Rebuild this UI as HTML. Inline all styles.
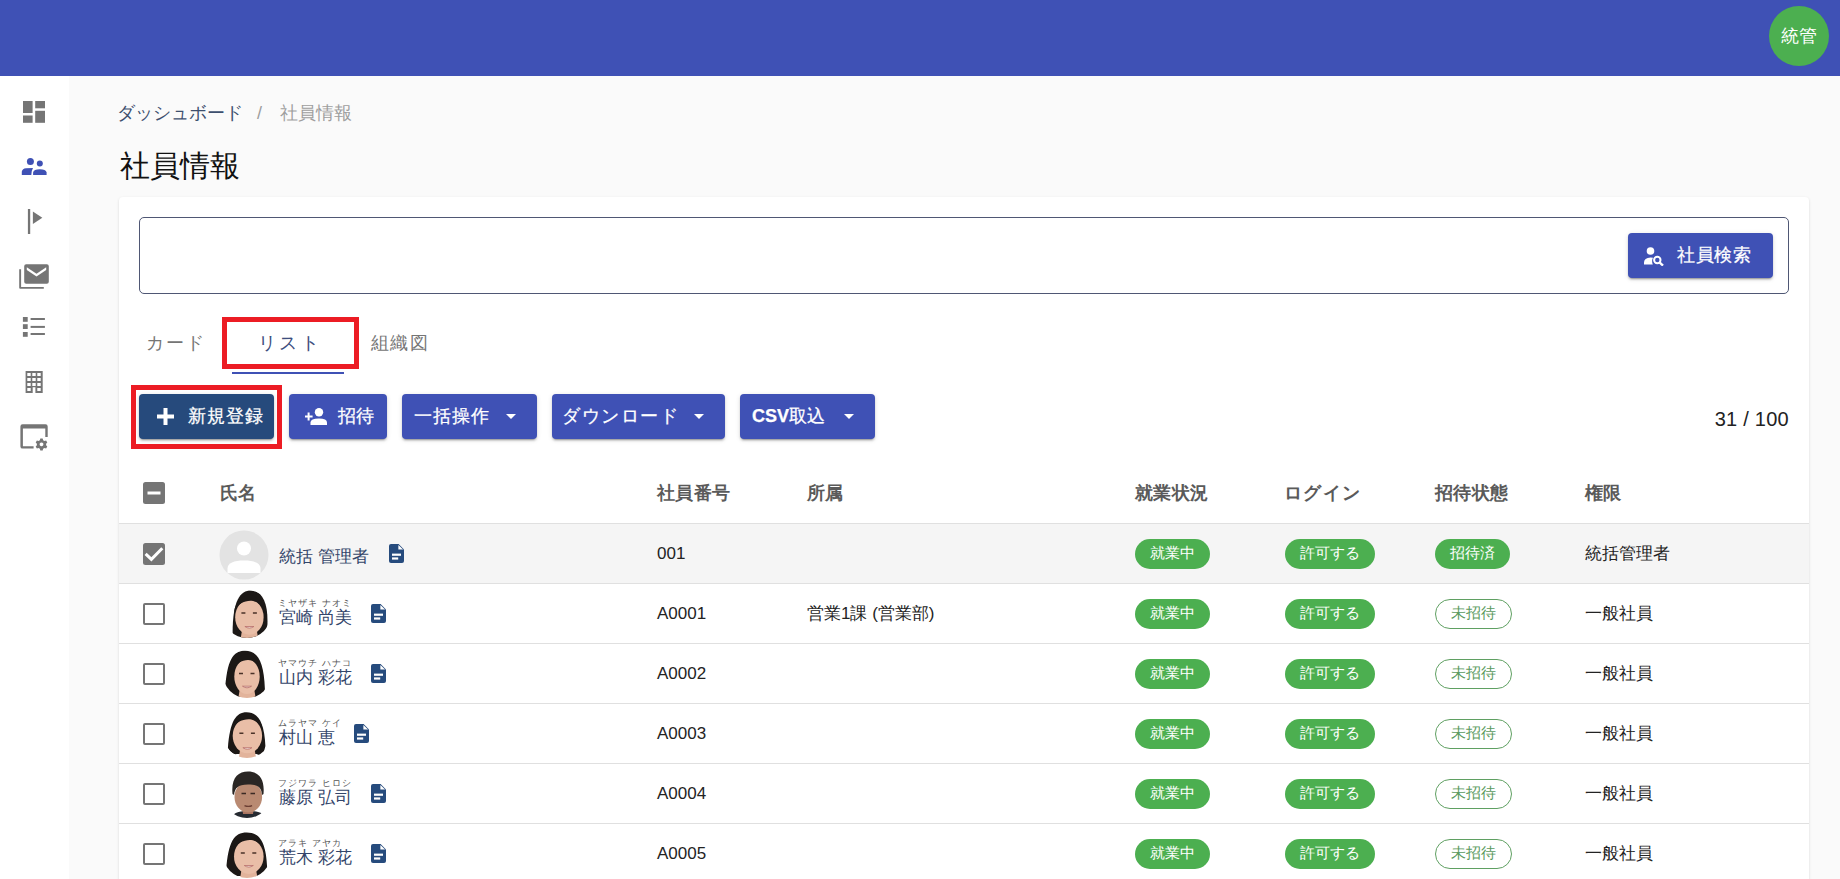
<!DOCTYPE html>
<html lang="ja">
<head>
<meta charset="utf-8">
<style>
*{box-sizing:border-box;margin:0;padding:0}
html,body{width:1840px;height:879px;overflow:hidden}
body{font-family:"Liberation Sans",sans-serif;background:#fafafa;position:relative;color:#212121}
.abs{position:absolute}
#hdr{left:0;top:0;width:1840px;height:76px;background:#3f51b5}
#av{left:1769px;top:6px;width:60px;height:60px;border-radius:50%;background:#4caf50;color:#fff;font-size:18px;line-height:60px;text-align:center}
#side{left:0;top:76px;width:69px;height:803px;background:#fff}
#bc{left:117px;top:100px;font-size:18px;line-height:26px;white-space:nowrap}
#bc .a{color:#3d4f6e}
#bc .s{color:#9e9e9e;margin:0 18px 0 14px}
#bc .c{color:#9e9e9e}
#ttl{left:120px;top:146px;font-size:30px;line-height:40px;color:#111}
#card{left:119px;top:197px;width:1690px;height:700px;background:#fff;border-radius:4px;box-shadow:0 1px 3px rgba(0,0,0,.12),0 1px 1px rgba(0,0,0,.06)}
#search{left:139px;top:217px;width:1650px;height:77px;border:1px solid #4f5774;border-radius:5px}
.btn{position:absolute;top:394px;height:45px;border-radius:4px;background:#3f51b5;color:#fff;font-size:18px;line-height:45px;white-space:nowrap;box-shadow:0 3px 1px -2px rgba(0,0,0,.2),0 2px 2px 0 rgba(0,0,0,.14),0 1px 5px 0 rgba(0,0,0,.12)}
.btn svg{position:absolute}
.btn span{position:absolute;top:0;-webkit-text-stroke:0.25px #fff}
.tab{position:absolute;top:330px;font-size:18px;line-height:26px;color:#757575;white-space:nowrap}
.red{position:absolute;border:5px solid #ec1c24}
#cnt{left:1600px;width:1789px;top:407px;font-size:19px;line-height:24px;color:#222;white-space:nowrap}
.th{position:absolute;top:480px;font-size:18px;line-height:26px;font-weight:bold;color:#5a5a5a;white-space:nowrap;letter-spacing:0.4px}
.row{position:absolute;left:119px;width:1690px;height:60px;border-top:1px solid #e0e0e0}
.cb{position:absolute;left:24px;top:19px;width:22px;height:22px;border:2.6px solid #757575;border-radius:2px}
.cbx{position:absolute;left:24px;top:19px;width:22px;height:22px}
.cell{position:absolute;top:17px;font-size:17px;line-height:26px;color:#232323;white-space:nowrap}
.chip{position:absolute;top:15px;height:30px;border-radius:15px;background:#4caf50;color:#fff;font-size:15px;line-height:28px;text-align:center;white-space:nowrap}
.chip.o{background:transparent;border:1px solid #5fa062;color:#5a9a5e;line-height:25px}
.nm{position:absolute;left:160px;font-size:17px;line-height:22px;color:#33456a;white-space:nowrap}
.ruby{position:absolute;left:159px;top:13px;font-size:9px;line-height:12px;color:#555;letter-spacing:1.1px;white-space:nowrap}
.doc{position:absolute;width:15px;height:19px}
.face{position:absolute;left:104px;top:6px;width:48px;height:48px}
</style>
</head>
<body>
<div id="hdr" class="abs"></div>
<div id="av" class="abs">統管</div>
<div id="side" class="abs"></div>

<svg class="abs" style="left:0;top:76px" width="68" height="400" viewBox="0 76 68 400">
 <g fill="#757575">
  <rect x="23" y="101" width="9.6" height="12" /><rect x="23" y="115.5" width="9.6" height="7.3"/>
  <rect x="35.2" y="101" width="9.8" height="7.3"/><rect x="35.2" y="110.8" width="9.8" height="12"/>
 </g>
 <g fill="#3f51b5">
  <circle cx="30.4" cy="161.5" r="3.5"/><circle cx="39.8" cy="163.6" r="3"/>
  <path d="M21.8 175 V171.5 Q22.5 168.6 26 168.2 L33 167.9 Q31.6 170 31.3 175 Z"/>
  <path d="M33.1 175 V172.5 Q33.8 169.4 39.8 169.3 Q45.8 169.4 46.6 172.5 V175 Z"/>
 </g>
 <g fill="#757575">
  <rect x="27.9" y="209" width="2.3" height="25"/>
  <path d="M32.9 211.6 L42.3 217.8 L32.9 224.1 Z"/>
  <path d="M26.2 264.2 H46.8 Q48.8 264.2 48.8 266.2 V281.8 Q48.8 283.8 46.8 283.8 H26.2 Q24.2 283.8 24.2 281.8 V266.2 Q24.2 264.2 26.2 264.2 Z M26.8 267.2 L36.5 273.8 L46.2 267.2 L46.2 270.0 L36.5 276.6 L26.8 270.0 Z" fill-rule="evenodd"/>
  <path d="M19.2 269.2 H21.1 V286.9 H43.8 V288.8 H20.2 Q19.2 288.8 19.2 287.8 Z"/>
  <rect x="22.9" y="317" width="4.8" height="4.8"/><rect x="22.9" y="324.2" width="4.8" height="4.8"/><rect x="22.9" y="332" width="4.8" height="4.8"/>
  <rect x="30.6" y="318" width="14.3" height="2"/><rect x="30.6" y="325.9" width="14.3" height="2"/><rect x="30.6" y="333" width="14.3" height="2"/>
  <path fill-rule="evenodd" d="M25.6 370.9 H42.7 V392.9 H35.4 V387.3 H32.7 V392.9 H25.6 Z M27.3 372.9 h3.4 v3.2 h-3.4 z M32.3 372.9 h3.4 v3.2 h-3.4 z M37.3 372.9 h3.4 v3.2 h-3.4 z M27.3 377.9 h3.4 v3.2 h-3.4 z M32.3 377.9 h3.4 v3.2 h-3.4 z M37.3 377.9 h3.4 v3.2 h-3.4 z M27.3 382.9 h3.4 v3.2 h-3.4 z M32.3 382.9 h3.4 v3.2 h-3.4 z M37.3 382.9 h3.4 v3.2 h-3.4 z M27.3 387.9 h3.4 v3.2 h-3.4 z M37.3 387.9 h3.4 v3.2 h-3.4 z"/>
  <path d="M22.6 424.3 H45.5 Q47.7 424.3 47.7 426.5 V437 H45.3 V428.6 H22.9 V446.2 H33.6 V448.6 H22.6 Q20.4 448.6 20.4 446.4 V426.5 Q20.4 424.3 22.6 424.3 Z"/>
  <path fill-rule="evenodd" d="M40.3 438.6 h2.4 l0.4 1.6 l1.4 0.8 l1.6-0.5 l1.2 2.1 l-1.2 1.1 v1.6 l1.2 1.1 l-1.2 2.1 l-1.6-0.5 l-1.4 0.8 l-0.4 1.6 h-2.4 l-0.4-1.6 l-1.4-0.8 l-1.6 0.5 l-1.2-2.1 l1.2-1.1 v-1.6 l-1.2-1.1 l1.2-2.1 l1.6 0.5 l1.4-0.8 z M41.5 442.4 a1.9 1.9 0 1 0 0.01 0 z"/>
 </g>
</svg>
<div id="bc" class="abs"><span class="a">ダッシュボード</span><span class="s">/</span><span class="c">社員情報</span></div>
<div id="ttl" class="abs">社員情報</div>

<div id="card" class="abs"></div>
<div id="search" class="abs"></div>
<div class="btn" style="left:1628px;top:233px;width:145px">
 <svg style="left:16px;top:14px" width="21" height="19" viewBox="0 0 21 19"><circle cx="6.5" cy="4" r="3.8" fill="#fff"/><path d="M0 17.5 V15.5 Q0 11 6.5 10.5 Q8 10.5 9 10.7 Q7.3 13.5 8.8 17.5 Z" fill="#fff"/><circle cx="13.3" cy="13" r="3.2" stroke="#fff" stroke-width="2" fill="none"/><path d="M15.5 15.3 L19 18.6" stroke="#fff" stroke-width="2.4"/></svg>
 <span style="left:49px;letter-spacing:0.7px">社員検索</span>
</div>

<div class="tab" style="left:146px;letter-spacing:2px">カード</div>
<div class="tab" style="left:258px;color:#3d4e7e;letter-spacing:3.3px">リスト</div>
<div class="tab" style="left:371px;letter-spacing:1.3px">組織図</div>
<div class="abs" style="left:232px;top:372px;width:112px;height:2px;background:#3f51b5"></div>
<div class="red" style="left:222px;top:317px;width:137px;height:52px"></div>

<div class="btn" style="left:139px;width:135px;background:#264a7c">
 <svg style="left:18px;top:14px" width="17" height="17" viewBox="0 0 17 17"><path d="M6.5 0 H10.5 V6.5 H17 V10.5 H10.5 V17 H6.5 V10.5 H0 V6.5 H6.5 Z" fill="#fff"/></svg>
 <span style="left:49px;letter-spacing:1.1px">新規登録</span>
</div>
<div class="red" style="left:131px;top:385px;width:151px;height:64px"></div>
<div class="btn" style="left:289px;width:98px">
 <svg style="left:16px;top:14px" width="22" height="17" viewBox="0 0 22 17"><circle cx="14" cy="4.2" r="4.2" fill="#fff"/><path d="M5.5 17 V14.5 Q5.5 10.5 14 10.5 Q22 10.5 22 14.5 V17 Z" fill="#fff"/><path d="M2.6 4.5 H4.6 V7.5 H7.6 V9.5 H4.6 V12.5 H2.6 V9.5 H-0.4 V7.5 H2.6 Z" fill="#fff"/></svg>
 <span style="left:49px">招待</span>
</div>
<div class="btn" style="left:402px;width:135px">
 <span style="left:12px;letter-spacing:0.9px">一括操作</span>
 <svg style="left:104px;top:20px" width="10" height="5" viewBox="0 0 10 5"><path d="M0 0 L5 5 L10 0 Z" fill="#fff"/></svg>
</div>
<div class="btn" style="left:552px;width:173px">
 <span style="left:10px;letter-spacing:1.6px">ダウンロード</span>
 <svg style="left:142px;top:20px" width="10" height="5" viewBox="0 0 10 5"><path d="M0 0 L5 5 L10 0 Z" fill="#fff"/></svg>
</div>
<div class="btn" style="left:740px;width:135px">
 <span style="left:12px"><b>CSV</b>取込</span>
 <svg style="left:104px;top:20px" width="10" height="5" viewBox="0 0 10 5"><path d="M0 0 L5 5 L10 0 Z" fill="#fff"/></svg>
</div>
<div class="abs" style="left:1600px;top:406px;width:189px;text-align:right;font-size:20px;line-height:26px;color:#222;letter-spacing:0.25px">31 / 100</div>

<svg class="abs" style="left:143px;top:482px" width="22" height="22" viewBox="0 0 22 22"><rect width="22" height="22" rx="2.5" fill="#757575"/><rect x="4.5" y="9.5" width="13" height="3" fill="#fff"/></svg>
<div class="th" style="left:220px">氏名</div>
<div class="th" style="left:657px">社員番号</div>
<div class="th" style="left:807px">所属</div>
<div class="th" style="left:1135px">就業状況</div>
<div class="th" style="left:1284px;letter-spacing:1.3px">ログイン</div>
<div class="th" style="left:1435px">招待状態</div>
<div class="th" style="left:1585px">権限</div>
<div class="row" style="top:523px;background:#f5f5f5"><svg class="cbx" viewBox="0 0 22 22"><rect width="22" height="22" rx="2.5" fill="#757575"/><path d="M2.6 10.8 L8.4 16.4 L19.3 5.3" stroke="#fff" stroke-width="3" fill="none"/></svg><svg class="face" style="left:100px;top:6px;width:50px;height:50px" viewBox="0 0 50 50"><circle cx="25" cy="25" r="24.5" fill="#e3e3e3"/><circle cx="25" cy="18.5" r="7" fill="#fff"/><path d="M8.5 43 V38.5 C8.5 33 15 30.5 25 30.5 C35 30.5 41.5 33 41.5 38.5 V43 Z" fill="#fff"/></svg><div class="nm" style="top:22px">統括 管理者</div><svg class="doc" style="left:270px;top:20px" viewBox="0 0 15 19"><path d="M2 0 H9.6 L15 5.4 V17 Q15 19 13 19 H2 Q0 19 0 17 V2 Q0 0 2 0 Z" fill="#264b7d"/><path d="M9.4 0.9 L9.4 5.6 L14.1 5.6 Z" fill="#fff"/><rect x="3" y="9.6" width="9" height="2.2" fill="#fff"/><rect x="3" y="13.4" width="6.2" height="2.2" fill="#fff"/></svg><div class="cell num" style="left:538px">001</div><div class="chip" style="left:1016px;width:75px">就業中</div><div class="chip" style="left:1166px;width:90px">許可する</div><div class="chip" style="left:1316px;width:75px">招待済</div><div class="cell" style="left:1466px">統括管理者</div></div>
<div class="row" style="top:583px;background:#fff"><div class="cb"></div><svg class="face" viewBox="0 0 48 48"><defs><clipPath id="c1"><circle cx="24" cy="24" r="24"/></clipPath></defs><g clip-path="url(#c1)"><path d="M9.7 49.0 C8.7 11.5 16.7 0.5 28.0 0.5 C38.4 0.5 45.4 11.5 44.4 35.0 L40.4 49.0 L11.7 49.0 Z" fill="#1c1816"/><path d="M19.4 38 L33.4 38 L35.4 50 L17.4 50 Z" fill="#e2b39b"/><ellipse cx="26.4" cy="27.2" rx="14.2" ry="17.5" fill="#e9bea7"/><path d="M11.2 23.7 C13.2 13.7 21.4 10.7 27.4 10.7 C32.4 10.7 39.6 13.7 41.6 23.7 C41.6 11.7 31.4 4.7 26.4 4.7 C21.4 4.7 11.2 11.7 11.2 23.7 Z" fill="#1c1816"/><path d="M18.4 23.0 h4 M29.9 23.0 h4" stroke="#4a3228" stroke-width="1.5"/><path d="M21.9 36.5 q4.5 3.2 9 0 z" fill="#f4e4e0" stroke="#b86e6a" stroke-width="0.8"/></g></svg><div class="ruby">ミヤザキ ナオミ</div><div class="nm" style="top:23px">宮崎 尚美</div><svg class="doc" style="left:252px;top:20px" viewBox="0 0 15 19"><path d="M2 0 H9.6 L15 5.4 V17 Q15 19 13 19 H2 Q0 19 0 17 V2 Q0 0 2 0 Z" fill="#264b7d"/><path d="M9.4 0.9 L9.4 5.6 L14.1 5.6 Z" fill="#fff"/><rect x="3" y="9.6" width="9" height="2.2" fill="#fff"/><rect x="3" y="13.4" width="6.2" height="2.2" fill="#fff"/></svg><div class="cell num" style="left:538px">A0001</div><div class="cell" style="left:688px">営業1課 (営業部)</div><div class="chip" style="left:1016px;width:75px">就業中</div><div class="chip" style="left:1166px;width:90px">許可する</div><div class="chip o" style="left:1316px;width:77px">未招待</div><div class="cell" style="left:1466px">一般社員</div></div>
<div class="row" style="top:643px;background:#fff"><div class="cb"></div><svg class="face" viewBox="0 0 48 48"><defs><clipPath id="c2"><circle cx="24" cy="24" r="24"/></clipPath></defs><g clip-path="url(#c2)"><path d="M2.0 41.0 C4.0 9.8 10.0 0.8 21.9 0.8 C33.9 0.8 40.9 9.8 41.9 39.0 L39.9 47.0 Q36.9 49.0 32.9 47.0 L11.0 47.0 Q6.0 48.0 2.0 41.0 Z" fill="#1c1816"/><path d="M17.0 38 L31.0 38 L33.0 50 L15.0 50 Z" fill="#e2b39b"/><ellipse cx="24.0" cy="26.6" rx="12.7" ry="17.5" fill="#e9bea7"/><path d="M10.3 23.1 C12.3 13.1 19.0 10.1 25.0 10.1 C30.0 10.1 35.8 13.1 37.8 23.1 C37.8 11.1 29.0 4.1 24.0 4.1 C19.0 4.1 10.3 11.1 10.3 23.1 Z" fill="#1c1816"/><path d="M16.0 23.4 h4 M27.5 23.4 h4" stroke="#4a3228" stroke-width="1.5"/><path d="M19.5 36.2 q4.5 3.2 9 0 z" fill="#f4e4e0" stroke="#b86e6a" stroke-width="0.8"/></g></svg><div class="ruby">ヤマウチ ハナコ</div><div class="nm" style="top:23px">山内 彩花</div><svg class="doc" style="left:252px;top:20px" viewBox="0 0 15 19"><path d="M2 0 H9.6 L15 5.4 V17 Q15 19 13 19 H2 Q0 19 0 17 V2 Q0 0 2 0 Z" fill="#264b7d"/><path d="M9.4 0.9 L9.4 5.6 L14.1 5.6 Z" fill="#fff"/><rect x="3" y="9.6" width="9" height="2.2" fill="#fff"/><rect x="3" y="13.4" width="6.2" height="2.2" fill="#fff"/></svg><div class="cell num" style="left:538px">A0002</div><div class="chip" style="left:1016px;width:75px">就業中</div><div class="chip" style="left:1166px;width:90px">許可する</div><div class="chip o" style="left:1316px;width:77px">未招待</div><div class="cell" style="left:1466px">一般社員</div></div>
<div class="row" style="top:703px;background:#fff"><div class="cb"></div><svg class="face" viewBox="0 0 48 48"><defs><clipPath id="c3"><circle cx="24" cy="24" r="24"/></clipPath></defs><g clip-path="url(#c3)"><path d="M4.9 38.0 C6.9 11.2 12.9 2.2 23.6 2.2 C34.4 2.2 41.4 11.2 42.4 36.0 L40.4 44.0 Q37.4 46.0 33.4 44.0 L13.9 44.0 Q8.9 45.0 4.9 38.0 Z" fill="#1c1816"/><path d="M17.4 38 L31.4 38 L33.4 50 L15.4 50 Z" fill="#e2b39b"/><ellipse cx="24.4" cy="25.8" rx="14.7" ry="17.5" fill="#e9bea7"/><path d="M8.7 22.3 C10.7 12.3 19.4 9.3 25.4 9.3 C30.4 9.3 38.0 12.3 40.0 22.3 C40.0 10.3 29.4 3.3 24.4 3.3 C19.4 3.3 8.7 10.3 8.7 22.3 Z" fill="#1c1816"/><path d="M16.4 23.3 h4 M27.9 23.3 h4" stroke="#4a3228" stroke-width="1.5"/><path d="M19.9 37.7 q4.5 3.2 9 0 z" fill="#f4e4e0" stroke="#b86e6a" stroke-width="0.8"/></g></svg><div class="ruby">ムラヤマ ケイ</div><div class="nm" style="top:23px">村山 恵</div><svg class="doc" style="left:235px;top:20px" viewBox="0 0 15 19"><path d="M2 0 H9.6 L15 5.4 V17 Q15 19 13 19 H2 Q0 19 0 17 V2 Q0 0 2 0 Z" fill="#264b7d"/><path d="M9.4 0.9 L9.4 5.6 L14.1 5.6 Z" fill="#fff"/><rect x="3" y="9.6" width="9" height="2.2" fill="#fff"/><rect x="3" y="13.4" width="6.2" height="2.2" fill="#fff"/></svg><div class="cell num" style="left:538px">A0003</div><div class="chip" style="left:1016px;width:75px">就業中</div><div class="chip" style="left:1166px;width:90px">許可する</div><div class="chip o" style="left:1316px;width:77px">未招待</div><div class="cell" style="left:1466px">一般社員</div></div>
<div class="row" style="top:763px;background:#fff"><div class="cb"></div><svg class="face" viewBox="0 0 48 48"><defs><clipPath id="c4"><circle cx="24" cy="24" r="24"/></clipPath></defs><g clip-path="url(#c4)"><ellipse cx="25" cy="4" rx="16" ry="0" fill="#fff"/><path d="M10 48 C10 43 14 41 25 41 C36 41 41 43 41 48 Z" fill="#262a31"/><path d="M19 36 L31 36 L30 44 L20 44 Z" fill="#a87360"/><ellipse cx="25.3" cy="27" rx="13.8" ry="15.5" fill="#b98a72"/><path d="M9.5 24 C8 8 15 1.5 25 1.5 C35 1.5 42 8 40.5 24 L39 25 C38.5 18 36 14.5 25 14.5 C14.5 14.5 12 18 11 25 Z" fill="#2a2624"/><path d="M18.5 23.5 h4.5 M27.5 23.5 h4.5" stroke="#3b2a24" stroke-width="1.5"/><path d="M21.5 35.6 q3.8 1.6 7.6 0" stroke="#6b3e33" stroke-width="1.4" fill="none"/></g></svg><div class="ruby">フジワラ ヒロシ</div><div class="nm" style="top:23px">藤原 弘司</div><svg class="doc" style="left:252px;top:20px" viewBox="0 0 15 19"><path d="M2 0 H9.6 L15 5.4 V17 Q15 19 13 19 H2 Q0 19 0 17 V2 Q0 0 2 0 Z" fill="#264b7d"/><path d="M9.4 0.9 L9.4 5.6 L14.1 5.6 Z" fill="#fff"/><rect x="3" y="9.6" width="9" height="2.2" fill="#fff"/><rect x="3" y="13.4" width="6.2" height="2.2" fill="#fff"/></svg><div class="cell num" style="left:538px">A0004</div><div class="chip" style="left:1016px;width:75px">就業中</div><div class="chip" style="left:1166px;width:90px">許可する</div><div class="chip o" style="left:1316px;width:77px">未招待</div><div class="cell" style="left:1466px">一般社員</div></div>
<div class="row" style="top:823px;background:#fff"><div class="cb"></div><svg class="face" viewBox="0 0 48 48"><defs><clipPath id="c5"><circle cx="24" cy="24" r="24"/></clipPath></defs><g clip-path="url(#c5)"><path d="M3.2 40.0 C5.2 11.4 11.2 2.4 23.7 2.4 C36.2 2.4 43.2 11.4 44.2 38.0 L42.2 46.0 Q39.2 48.0 35.2 46.0 L12.2 46.0 Q7.2 47.0 3.2 40.0 Z" fill="#1c1816"/><path d="M18.8 38 L32.8 38 L34.8 50 L16.8 50 Z" fill="#e2b39b"/><ellipse cx="25.8" cy="26.5" rx="14.8" ry="17.5" fill="#e9bea7"/><path d="M10.0 23.0 C12.0 13.0 20.8 10.0 26.8 10.0 C31.8 10.0 39.6 13.0 41.6 23.0 C41.6 11.0 30.8 4.0 25.8 4.0 C20.8 4.0 10.0 11.0 10.0 23.0 Z" fill="#1c1816"/><path d="M17.8 22.9 h4 M29.3 22.9 h4" stroke="#4a3228" stroke-width="1.5"/><path d="M21.3 35.5 q4.5 3.2 9 0 z" fill="#f4e4e0" stroke="#b86e6a" stroke-width="0.8"/></g></svg><div class="ruby">アラキ アヤカ</div><div class="nm" style="top:23px">荒木 彩花</div><svg class="doc" style="left:252px;top:20px" viewBox="0 0 15 19"><path d="M2 0 H9.6 L15 5.4 V17 Q15 19 13 19 H2 Q0 19 0 17 V2 Q0 0 2 0 Z" fill="#264b7d"/><path d="M9.4 0.9 L9.4 5.6 L14.1 5.6 Z" fill="#fff"/><rect x="3" y="9.6" width="9" height="2.2" fill="#fff"/><rect x="3" y="13.4" width="6.2" height="2.2" fill="#fff"/></svg><div class="cell num" style="left:538px">A0005</div><div class="chip" style="left:1016px;width:75px">就業中</div><div class="chip" style="left:1166px;width:90px">許可する</div><div class="chip o" style="left:1316px;width:77px">未招待</div><div class="cell" style="left:1466px">一般社員</div></div>
</body>
</html>
